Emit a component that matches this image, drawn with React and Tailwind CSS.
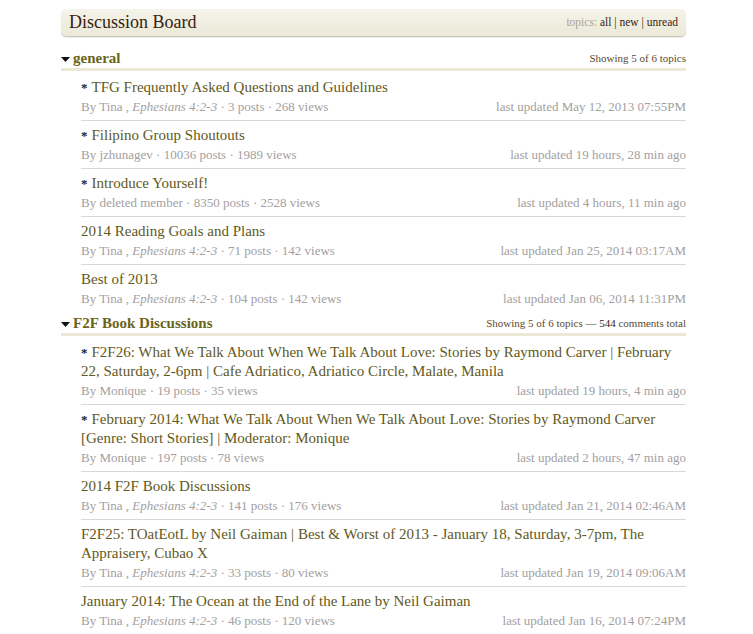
const SECTIONS = [
  {
    name: 'general',
    summary: <>Showing 5 of 6 topics</>,
    topics: [
      { sticky: true, title: 'TFG Frequently Asked Questions and Guidelines', by: 'Tina', tag: 'Ephesians 4:2-3', posts: '3', views: '268', updated: 'May 12, 2013 07:55PM' },
      { sticky: true, title: 'Filipino Group Shoutouts', by: 'jzhunagev', posts: '10036', views: '1989', updated: '19 hours, 28 min ago' },
      { sticky: true, title: 'Introduce Yourself!', by: 'deleted member', posts: '8350', views: '2528', updated: '4 hours, 11 min ago' },
      { title: '2014 Reading Goals and Plans', by: 'Tina', tag: 'Ephesians 4:2-3', posts: '71', views: '142', updated: 'Jan 25, 2014 03:17AM' },
      { title: 'Best of 2013', by: 'Tina', tag: 'Ephesians 4:2-3', posts: '104', views: '142', updated: 'Jan 06, 2014 11:31PM' },
    ],
  },
  {
    name: 'F2F Book Discussions',
    summary: <>Showing 5 of 6 topics — <span className="text-[#382110]">544</span> comments total</>,
    topics: [
      { sticky: true, title: 'F2F26: What We Talk About When We Talk About Love: Stories by Raymond Carver | February 22, Saturday, 2-6pm | Cafe Adriatico, Adriatico Circle, Malate, Manila', by: 'Monique', posts: '19', views: '35', updated: '19 hours, 4 min ago' },
      { sticky: true, title: 'February 2014: What We Talk About When We Talk About Love: Stories by Raymond Carver [Genre: Short Stories] | Moderator: Monique', by: 'Monique', posts: '197', views: '78', updated: '2 hours, 47 min ago' },
      { title: '2014 F2F Book Discussions', by: 'Tina', tag: 'Ephesians 4:2-3', posts: '141', views: '176', updated: 'Jan 21, 2014 02:46AM' },
      { title: 'F2F25: TOatEotL by Neil Gaiman | Best & Worst of 2013 - January 18, Saturday, 3-7pm, The Appraisery, Cubao X', by: 'Tina', tag: 'Ephesians 4:2-3', posts: '33', views: '80', updated: 'Jan 19, 2014 09:06AM' },
      { title: 'January 2014: The Ocean at the End of the Lane by Neil Gaiman', by: 'Tina', tag: 'Ephesians 4:2-3', posts: '46', views: '120', updated: 'Jan 16, 2014 07:24PM' },
    ],
  },
]

function Topic({ t, last }) {
  return (
    <div className={'pt-[5px] pb-[4px] ' + (last ? '' : 'border-b border-[#d8d8d8]')}>
      <div className="text-[15px] leading-[19px] text-[#5f591c]">
        {t.sticky && <span className="text-[13px] leading-none font-bold text-[#222] mr-[4px]">*</span>}
        {t.title}
      </div>
      <div className="flex justify-between text-[13px] leading-[19px] text-[#a3a09f]">
        <span>
          By {t.by}
          {t.tag && <> , <i>{t.tag}</i></>} · {t.posts} posts · {t.views} views
        </span>
        <span>last updated {t.updated}</span>
      </div>
    </div>
  )
}

export default function App() {
  return (
    <div className="bg-white min-h-[634px] font-['Liberation_Serif',Georgia,serif]">
      <div className="w-[625px] ml-[61px] pt-[9px]">
        <div className="h-[28px] flex items-center justify-between px-[8px] rounded-[5px] border-b border-[#c9c8bd] bg-gradient-to-b from-[#f5f4ea] to-[#ebe9d8] shadow-[0_1px_1px_rgba(0,0,0,0.08)]">
          <span className="text-[18px] text-[#382110]">Discussion Board</span>
          <span className="text-[11.5px] text-[#382110]">
            <span className="text-[#a7a59a]">topics: </span>all | new | unread
          </span>
        </div>

        {SECTIONS.map((s, i) => (
          <div key={s.name} className={i === 0 ? 'mt-[12px]' : 'mt-[2px]'}>
            <div className="h-[22px] flex items-center justify-between border-b-[3px] border-[#ebe8d6]">
              <div className="flex items-center">
                <svg width="9" height="5" viewBox="0 0 9 5" className="mr-[3px] mt-[2px]">
                  <path d="M0 0 L9 0 L4.5 5 Z" fill="#111" />
                </svg>
                <span className="text-[15px] font-bold text-[#6b6418]">{s.name}</span>
              </div>
              <span className="text-[11px] text-[#5c4a2e]">{s.summary}</span>
            </div>
            <div className="ml-[20px] pt-[2px]">
              {s.topics.map((t, j) => (
                <Topic key={j} t={t} last={j === s.topics.length - 1} />
              ))}
            </div>
          </div>
        ))}
      </div>
    </div>
  )
}
